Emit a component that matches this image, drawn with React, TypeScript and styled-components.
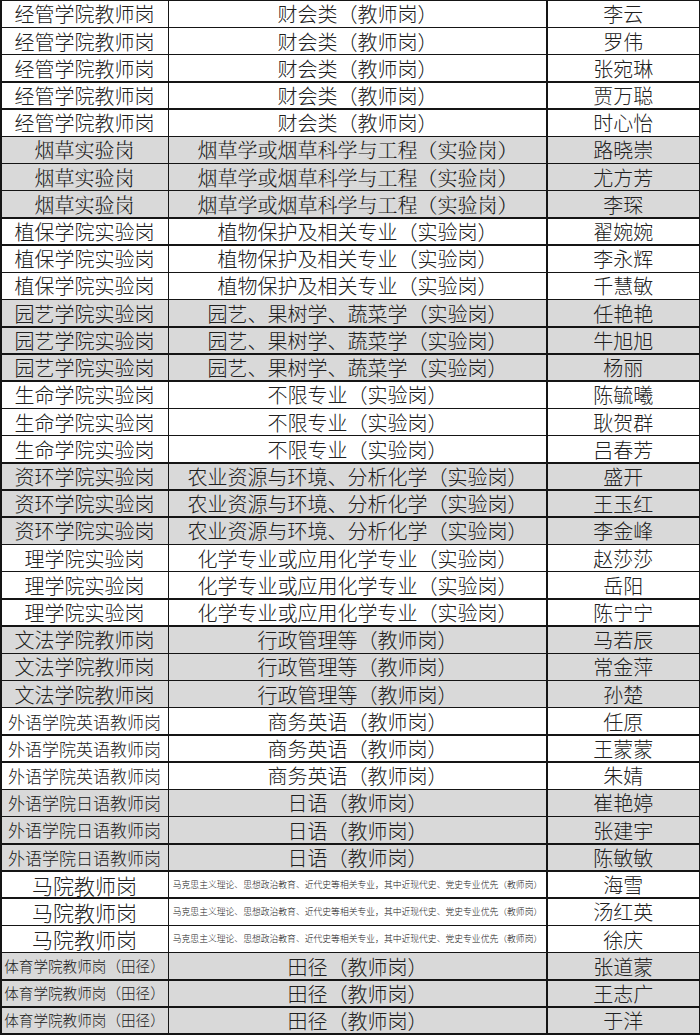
import styled, { createGlobalStyle } from "styled-components";

const GlobalStyle = createGlobalStyle`
  html, body {
    margin: 0;
    padding: 0;
    background: #ffffff;
  }
`;

type Group = {
  post: string;
  major: string;
  names: string[];
  shaded: boolean;
  serif?: boolean;
  postSize?: number;
  majorSize?: number;
};

const MARX =
  "马克思主义理论、思想政治教育、近代史等相关专业，其中近现代史、党史专业优先（教师岗）";

const groups: Group[] = [
  { post: "经管学院教师岗", major: "财会类（教师岗）", names: ["李云", "罗伟", "张宛琳", "贾万聪", "时心怡"], shaded: false },
  { post: "烟草实验岗", major: "烟草学或烟草科学与工程（实验岗）", names: ["路晓崇", "尤方芳", "李琛"], shaded: true, serif: true },
  { post: "植保学院实验岗", major: "植物保护及相关专业（实验岗）", names: ["翟婉婉", "李永辉", "千慧敏"], shaded: false },
  { post: "园艺学院实验岗", major: "园艺、果树学、蔬菜学（实验岗）", names: ["任艳艳", "牛旭旭", "杨丽"], shaded: true },
  { post: "生命学院实验岗", major: "不限专业（实验岗）", names: ["陈毓曦", "耿贺群", "吕春芳"], shaded: false },
  { post: "资环学院实验岗", major: "农业资源与环境、分析化学（实验岗）", names: ["盛开", "王玉红", "李金峰"], shaded: true },
  { post: "理学院实验岗", major: "化学专业或应用化学专业（实验岗）", names: ["赵莎莎", "岳阳", "陈宁宁"], shaded: false },
  { post: "文法学院教师岗", major: "行政管理等（教师岗）", names: ["马若辰", "常金萍", "孙楚"], shaded: true },
  { post: "外语学院英语教师岗", major: "商务英语（教师岗）", names: ["任原", "王蒙蒙", "朱婧"], shaded: false, postSize: 17 },
  { post: "外语学院日语教师岗", major: "日语（教师岗）", names: ["崔艳婷", "张建宇", "陈敏敏"], shaded: true, postSize: 17 },
  { post: "马院教师岗", major: MARX, names: ["海雪", "汤红英", "徐庆"], shaded: false, postSize: 21, majorSize: 8.8 },
  { post: "体育学院教师岗（田径）", major: "田径（教师岗）", names: ["张道蒙", "王志广", "于洋"], shaded: true, postSize: 14.6 },
];

const Sheet = styled.div`
  display: grid;
  grid-template-columns: 166px 377px 1fr;
  grid-template-rows: repeat(38, 1fr);
  gap: 1.5px;
  width: 700px;
  height: 1035px;
  box-sizing: border-box;
  padding: 1px 1px 1.5px 1.5px;
  background: #151515;
`;

const Cell = styled.div<{ $shaded: boolean; $size: number; $serif?: boolean }>`
  display: flex;
  align-items: center;
  justify-content: center;
  min-width: 0;
  white-space: nowrap;
  background: ${(p) => (p.$shaded ? "#d9d9d9" : "#ffffff")};
  color: #202020;
  font-family: ${(p) =>
    p.$serif
      ? `"Noto Serif CJK SC", "Noto Sans CJK SC", serif`
      : `"Noto Sans CJK SC", sans-serif`};
  font-weight: 300;
  font-size: ${(p) => p.$size}px;
  line-height: 1.15;
`;

export default function App() {
  return (
    <>
      <GlobalStyle />
      <Sheet>
        {groups.flatMap((g) =>
          g.names.map((name, i) => [
            <Cell key={`${g.post}-${i}-a`} $shaded={g.shaded} $size={g.postSize ?? 20} $serif={g.serif}>
              {g.post}
            </Cell>,
            <Cell key={`${g.post}-${i}-b`} $shaded={g.shaded} $size={g.majorSize ?? 20} $serif={g.serif}>
              {g.major}
            </Cell>,
            <Cell key={`${g.post}-${i}-c`} $shaded={g.shaded} $size={20}>
              {name}
            </Cell>,
          ])
        )}
      </Sheet>
    </>
  );
}
